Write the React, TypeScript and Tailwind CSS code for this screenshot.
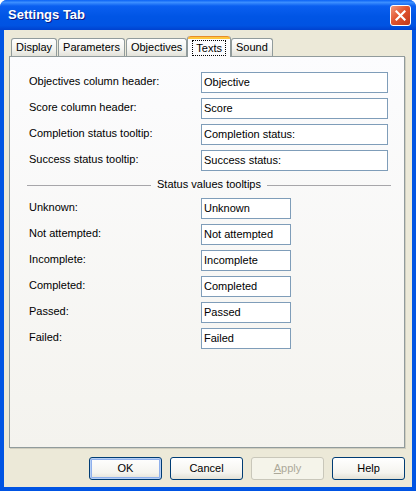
import React from "react";

const font = "font-['Liberation_Sans','Arial',sans-serif]";

function Tab({ label, active }: { label: string; active?: boolean }) {
  if (active) {
    return (
      <div className="relative -mx-[1px] z-10 -mb-px flex h-[21px] flex-col rounded-t-[3px] border-x border-[#919B9C] bg-[#FCFCFE]">
        <div className="h-[3px] rounded-t-[3px] border-t border-[#E68B2C] bg-[#FFC73C]" />
        <div className="flex flex-1 items-center px-[4px]">
          <span className="border border-dotted border-black px-[3px] leading-[14px]">{label}</span>
        </div>
      </div>
    );
  }
  return (
    <div className="mt-[3px] flex h-[18px] items-center rounded-t-[3px] border border-b-0 border-[#919B9C] bg-[linear-gradient(#FFFFFF,#F3F3EF_60%,#E3E2DA)] px-[4px]">
      {label}
    </div>
  );
}

function Row({ label, value, wide }: { label: string; value: string; wide?: boolean }) {
  return (
    <div className="flex h-[21px] items-center">
      <div className="w-[172px] pb-[2px]">{label}</div>
      <div
        className={`flex h-[21px] items-center border border-[#7F9DB9] bg-white pl-[2px] text-black ${
          wide ? "w-[187px]" : "w-[90px]"
        }`}
      >
        {value}
      </div>
    </div>
  );
}

function Button({ label, def, disabled }: { label: React.ReactNode; def?: boolean; disabled?: boolean }) {
  return (
    <div
      className={`flex h-[23px] w-[73px] items-center justify-center rounded-[3px] border ${
        disabled
          ? "border-[#C9C7BA] bg-[#F5F4EA] text-[#ACA899]"
          : "border-[#003C74] bg-[linear-gradient(#FFFFFF,#F5F4EF_70%,#E3E1D6)] text-black"
      } ${def ? "shadow-[inset_0_0_0_1px_#B6CFF5,inset_0_0_0_2px_#8FB0EC]" : ""}`}
    >
      {label}
    </div>
  );
}

export default function App() {
  return (
    <div className={`${font} h-[491px] w-[416px] overflow-hidden text-[11px] text-black`}>
      <div className="flex h-full flex-col rounded-t-[7px] bg-[#0054E3]">
        {/* title bar */}
        <div className="flex h-[30px] shrink-0 items-center justify-between rounded-t-[7px] bg-[linear-gradient(#0A62F5_0%,#3C8FFF_8%,#0A5FF0_20%,#0055E5_55%,#0053E2_85%,#0042CF_100%)] pl-[8px] pr-[5px]">
          <span className="text-[13px] font-bold text-white [text-shadow:1px_1px_0_#0A1883]">
            Settings Tab
          </span>
          <div className="flex h-[21px] w-[21px] items-center justify-center rounded-[3px] border border-white bg-[linear-gradient(135deg,#F29A7E,#E2552F_45%,#C1381A)]">
            <svg width="11" height="11" viewBox="0 0 11 11">
              <path d="M1.5 1.5 L9.5 9.5 M9.5 1.5 L1.5 9.5" stroke="white" strokeWidth="2.2" strokeLinecap="square" />
            </svg>
          </div>
        </div>

        {/* client area */}
        <div className="mx-[4px] mb-[4px] flex flex-1 flex-col bg-[#ECE9D8] pl-[5px] pr-[7px] pt-[5px]">
          {/* tabs */}
          <div className="flex h-[21px] items-end gap-[1px] pl-[2px]">
            <Tab label="Display" />
            <Tab label="Parameters" />
            <Tab label="Objectives" />
            <Tab label="Texts" active />
            <Tab label="Sound" />
          </div>

          {/* panel */}
          <div className="flex h-[392px] flex-col border border-[#919B9C] bg-[linear-gradient(#FCFCFE,#F4F3EE)] pl-[19px] pt-[15px] shadow-[1px_1px_0_#D0CEBF]">
            <div className="flex flex-col gap-[5px]">
              <Row label="Objectives column header:" value="Objective" wide />
              <Row label="Score column header:" value="Score" wide />
              <Row label="Completion status tooltip:" value="Completion status:" wide />
              <Row label="Success status tooltip:" value="Success status:" wide />
            </div>

            <div className="mt-[6px] flex h-[16px] w-[364px] -ml-[2px] items-center">
              <div className="h-px flex-1 bg-[#A7A6AA]" />
              <span className="px-[6px] pb-[1px]">Status values tooltips</span>
              <div className="h-px flex-1 bg-[#A7A6AA]" />
            </div>

            <div className="mt-[5px] flex flex-col gap-[5px]">
              <Row label="Unknown:" value="Unknown" />
              <Row label="Not attempted:" value="Not attempted" />
              <Row label="Incomplete:" value="Incomplete" />
              <Row label="Completed:" value="Completed" />
              <Row label="Passed:" value="Passed" />
              <Row label="Failed:" value="Failed" />
            </div>
          </div>

          {/* buttons */}
          <div className="mt-[9px] flex justify-end gap-[8px] pr-0">
            <Button label="OK" def />
            <Button label="Cancel" />
            <Button
              label={
                <span>
                  <span className="underline">A</span>pply
                </span>
              }
              disabled
            />
            <Button label="Help" />
          </div>
        </div>
      </div>
    </div>
  );
}
